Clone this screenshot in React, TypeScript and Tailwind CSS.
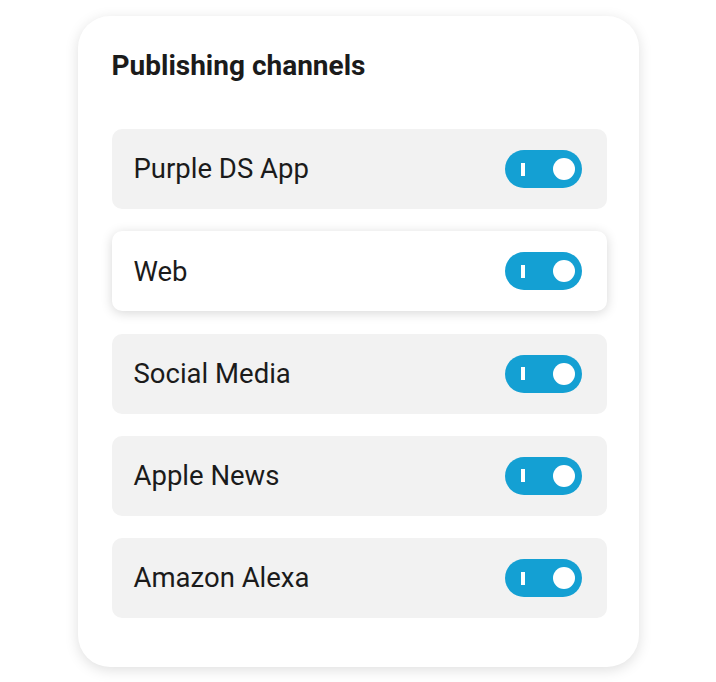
import React from "react";

const channels = [
  { name: "Purple DS App", active: false },
  { name: "Web", active: true },
  { name: "Social Media", active: false },
  { name: "Apple News", active: false },
  { name: "Amazon Alexa", active: false },
];

const Toggle = () => (
  <div className="relative w-[77px] h-[38px] rounded-full bg-[#14a0d3] flex items-center justify-between pl-[16px] pr-[7px]">
    <span className="w-[4px] h-[13px] bg-white" />
    <span className="w-[22px] h-[22px] rounded-full bg-white" />
  </div>
);

const App = () => {
  return (
    <div className="min-h-screen bg-white pt-[16px]" style={{ fontFamily: "Roboto, 'Noto Sans', sans-serif" }}>
      <div className="mx-auto w-[561px] rounded-[32px] bg-white shadow-[0_3px_14px_rgba(0,0,0,0.13)] pt-[34px] pb-[49px] pl-[34px] pr-[32px]">
        <h2 className="text-[28px] leading-[32px] font-bold text-[#1b1b1b]">Publishing channels</h2>
        <div className="mt-[47px] flex flex-col gap-[22.25px]">
          {channels.map((c) => (
            <div
              key={c.name}
              className={
                c.active
                  ? "h-[80px] rounded-[10px] bg-white shadow-[0_2px_12px_rgba(0,0,0,0.16)] flex items-center justify-between pl-[22px] pr-[25px]"
                  : "h-[80px] rounded-[10px] bg-[#f2f2f2] flex items-center justify-between pl-[22px] pr-[25px]"
              }
            >
              <span className="text-[27.5px] text-[#1b1b1b]">{c.name}</span>
              <Toggle />
            </div>
          ))}
        </div>
      </div>
    </div>
  );
};

export default App;
